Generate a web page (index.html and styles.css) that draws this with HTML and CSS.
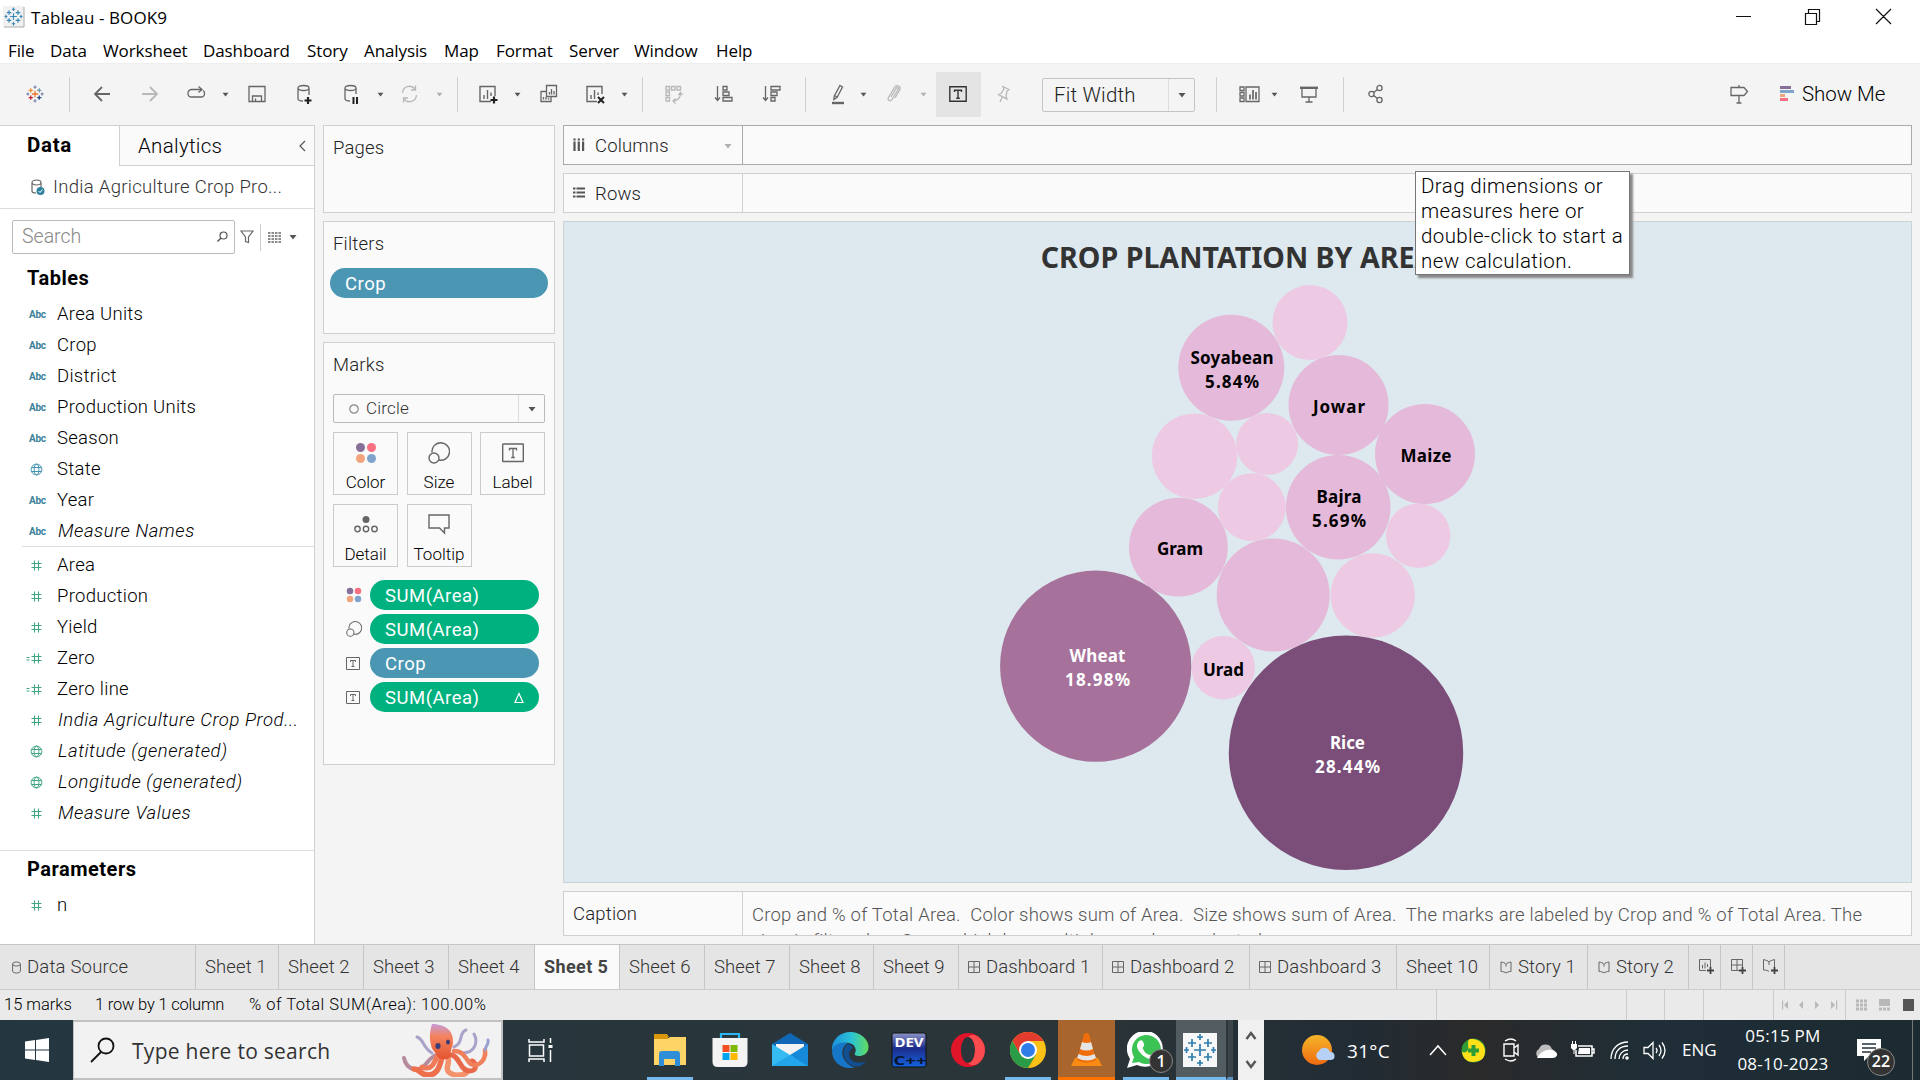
FILE: index.html
```html
<!DOCTYPE html>
<html lang="en">
<head>
<meta charset="utf-8">
<title>Tableau - BOOK9</title>
<link rel="stylesheet" href="styles.css">
</head>
<body>
<svg class="defs" width="0" height="0" aria-hidden="true">
  <defs>
    <symbol id="marks-logo" viewBox="0 0 34 34">
      <path d="M17 11v12M11 17h12M9 6v8M5 10h8M25 6v8M21 10h8M9 20v8M5 24h8M25 20v8M21 24h8M17 1v6M14 4h6M17 27v6M14 30h6M3.500 14v6M1 17h5M30.500 14v6M28 17h5"/>
    </symbol>
    <symbol id="caret" viewBox="0 0 8 6"><path d="M0.500 1h7L4 5.500z"/></symbol>
    <symbol id="globe" viewBox="0 0 13 13">
      <g fill="none" stroke="currentColor"><circle cx="6.500" cy="6.500" r="5.400"/><ellipse cx="6.500" cy="6.500" rx="2.400" ry="5.400"/><path d="M1.500 4.500h10M1.500 8.500h10"/></g>
    </symbol>
    <symbol id="hash" viewBox="0 0 13 13"><path d="M4.500 1.500v10M8.500 1.500v10M1.500 4.500h10M1.500 8.500h10" stroke="currentColor" stroke-width="1.100"/></symbol>
    <symbol id="calc-hash" viewBox="0 0 17 13"><path d="M8.500 1.500v10M12.500 1.500v10M5.500 4.500h10M5.500 8.500h10M0.500 5.500h3M0.500 8h3" stroke="currentColor" stroke-width="1.100"/></symbol>
    <symbol id="dots" viewBox="0 0 22 22"><circle cx="5.500" cy="5.500" r="4.500" fill="#866f98"/><circle cx="16.500" cy="5.500" r="4.500" fill="#fb6f82"/><circle cx="5.500" cy="16.500" r="4.500" fill="#f2a57c"/><circle cx="16.500" cy="16.500" r="4.500" fill="#80a3cb"/></symbol>
    <symbol id="size" viewBox="0 0 22 22"><path d="M4 10.500A8.800 8.800 0 1 1 10.500 18" fill="none" stroke="#666" stroke-width="1.400"/><circle cx="6" cy="16" r="5" fill="none" stroke="#666" stroke-width="1.400"/></symbol>
    <symbol id="label" viewBox="0 0 22 20"><rect x="0.700" y="1" width="20.600" height="17.500" rx="0.500" fill="none" stroke="#666" stroke-width="1.400"/><path d="M7.500 7.500V5.500h7v2M11 5.500v9M9.200 14.500h3.600" fill="none" stroke="#666" stroke-width="1.300"/></symbol>
    <symbol id="small-label" viewBox="0 0 14 13"><path d="M.5.500h13v12H.5zM4.500 5V3.500h5V5M7 3.500v6M5.500 9.500h3" fill="none" stroke="#666"/></symbol>
    <symbol id="dash" viewBox="0 0 12 12"><path d="M.5.500h11v11H.5zM6 .5v11M.5 6h11" fill="none" stroke="#666"/></symbol>
    <symbol id="book" viewBox="0 0 12 13"><path d="M6 3.500C5 1.500 3 1.500 1 1v9.500c2 0 4 .5 5 1.500 1-1 3-1.500 5-1.500V1C9 1.500 7 1.500 6 3.500zM6 3.500v2" fill="none" stroke="#666"/></symbol>
  </defs>
</svg>

<header class="titlebar">
  <svg class="app-icon" width="22" height="22" viewBox="0 0 22 22"><rect width="21" height="21" fill="#f1f1f1"/><path d="M21 1v20H1" fill="none" stroke="#aaa"/><use href="#marks-logo" x="1" y="1" width="19" height="19" stroke="#3585b5" stroke-width="2"/></svg>
  <span class="window-title">Tableau - BOOK9</span>
  <svg class="window-controls" width="160" height="20" viewBox="0 0 160 20"><path d="M0 9.500h15M69.500 6.500h11v11h-11zM72.500 6.500v-4h11v12h-3M140 2l15 15M155 2l-15 15" fill="none" stroke="#111" stroke-width="1.200"/></svg>
</header>

<nav class="menubar">
  <span>File</span><span>Data</span><span>Worksheet</span><span>Dashboard</span><span>Story</span><span>Analysis</span><span>Map</span><span>Format</span><span>Server</span><span>Window</span><span>Help</span>
</nav>

<div class="toolbar">
  <svg class="tool" viewBox="0 0 20 22"><g transform="translate(0 2) scale(.53)" stroke-width="2.400" fill="none"><path d="M17 11v12M11 17h12" stroke="#e8762c"/><path d="M9 6v8M5 10h8" stroke="#eb912b"/><path d="M25 6v8M21 10h8" stroke="#7099a6"/><path d="M9 20v8M5 24h8" stroke="#c72035"/><path d="M25 20v8M21 24h8" stroke="#1f457e"/><path d="M17 1v6M14 4h6M17 27v6M14 30h6M3.500 14v6M1 17h5M30.500 14v6M28 17h5" stroke="#7f8bb5"/></g></svg>
  <i class="sep"></i>
  <svg class="tool" viewBox="0 0 20 22"><path d="M16 11H1M8 4l-7 7 7 7" stroke-width="1.800"/></svg>
  <svg class="tool pale" viewBox="0 0 20 22"><path d="M0 11h15M8 4l7 7-7 7" stroke-width="1.800"/></svg>
  <svg class="tool" viewBox="0 0 20 22"><path d="M15 6.500H4.500a4 4 0 0 0-3.500 4c0 2 1.500 3.500 3.500 3.500h9.500c2 0 3.500-1.500 3.500-3.500 0-1.500-.7-2.600-1.500-3M11.500 3.500l3.500 3-3.500 3"/></svg>
  <svg class="caret"><use href="#caret"/></svg>
  <svg class="tool" viewBox="0 0 20 22"><path d="M1 3.500h16v15H1zM4.500 18.500v-5.500h9v5.500M7.500 18v-2.500"/></svg>
  <svg class="tool" viewBox="0 0 20 22"><path d="M1 5v10.500c0 1.500 2 2.500 5 2.500M1 5c0-1.600 2.500-2.500 5.500-2.500S12 3.400 12 5s-2.500 2.500-5.500 2.500S1 6.600 1 5zM12 5v7"/><path d="M11 14v7M7.500 17.500h7" stroke="#222" stroke-width="2.200"/></svg>
  <svg class="tool" viewBox="0 0 20 22"><path d="M1 5v10.500c0 1.500 2 2.500 5 2.500M1 5c0-1.600 2.500-2.500 5.500-2.500S12 3.400 12 5s-2.500 2.500-5.500 2.500S1 6.600 1 5zM12 5v6"/><path d="M9.500 14v7M13 14v7" stroke="#222" stroke-width="2"/></svg>
  <svg class="caret"><use href="#caret"/></svg>
  <svg class="tool pale" viewBox="0 0 20 22"><path d="M1.500 10A7 7 0 0 1 14 6M15.500 12A7 7 0 0 1 3 16M14.500 2.500V7H10M2.500 19.500V15H7"/></svg>
  <svg class="caret pale"><use href="#caret"/></svg>
  <i class="sep"></i>
  <svg class="tool" viewBox="0 0 20 22"><path d="M12 18.500H1v-15h15V13M5 16v-4M8.500 16V7M12 13V9.500" stroke-width="1.400"/><path d="M15 13.500v7M11.500 17h7" stroke="#222" stroke-width="2.200"/></svg>
  <svg class="caret"><use href="#caret"/></svg>
  <svg class="tool" viewBox="0 0 20 22"><path d="M6.500 2.500h10v11h-10zM9.500 11.500V9M11.500 11.500V6M14 11.500V8M6 8.500H1v10h10v-4.500M3.500 16.500V14M6 16.500V14M8.500 16.500V15"/></svg>
  <svg class="tool" viewBox="0 0 20 22"><path d="M11 18.500H1v-15h15V11M5 16v-4M8.500 16V7M12 12V9.500" stroke-width="1.400"/><path d="M12 14l6 6M18 14l-6 6" stroke="#222" stroke-width="2"/></svg>
  <svg class="caret"><use href="#caret"/></svg>
  <i class="sep"></i>
  <svg class="tool pale" viewBox="0 0 20 22"><path d="M1 3.500h3.500v3.500H1zM6.500 3.500H10v3.500H6.500zM12 3.500h3.500v3.500H12zM1 9h3.500v3.500H1zM1 14.500h3.500V18H1zM15.500 10c0 5-3 7.500-7 8M13.500 12l2-2.500 2 2.500M10.500 15.500L8 18l2.500 2.500"/></svg>
  <svg class="tool" viewBox="0 0 20 22"><path d="M3.500 3v14M1 14.500L3.500 17.500 6 14.500M9 3.500h4V7H9zM9 9h6v3.500H9zM9 14.500h9V18H9z"/></svg>
  <svg class="tool" viewBox="0 0 20 22"><path d="M3.500 3v14M1 14.500L3.500 17.500 6 14.500M9 3.500h9V7H9zM9 9h6v3.500H9zM9 14.500h4V18H9z"/></svg>
  <i class="sep"></i>
  <svg class="tool" viewBox="0 0 20 22"><path d="M9 2.500l2.500 1.500L6 14.500 2.800 16.500l.5-3.500zM3.500 12.500l2.500 1.500"/><path d="M1 20h12" stroke-width="2.400"/></svg>
  <svg class="caret"><use href="#caret"/></svg>
  <svg class="tool pale" viewBox="0 0 20 22"><path d="M5 14l5-8.500c1-1.600 3-.6 2 1.200L6 16.500c-1.500 2.500-5 .700-3.500-2L8.500 4.500c2.200-3.500 7-1 5 2.800L9 15"/></svg>
  <svg class="caret pale"><use href="#caret"/></svg>
  <span class="toggle"><svg width="18" height="18" viewBox="0 0 18 18"><path d="M.8 1.800h16.400v14.400H.8zM5.500 7V5.200h7V7M9 5.200v8M7.200 13.200h3.600" fill="none" stroke="#333" stroke-width="1.400"/></svg></span>
  <svg class="tool pale" viewBox="0 0 20 22"><path d="M7 3.500l6 3-2 1.500-1 5.500 1 2.500-8.500-4.500 2.500-1 3-4.500zM6.500 13.500L4 19"/></svg>
  <span class="fit"><span>Fit Width</span><svg class="caret"><use href="#caret"/></svg></span>
  <i class="sep"></i>
  <svg class="tool wide" viewBox="0 0 22 22"><path d="M1 4h4v3.500H1zM1 9.500h4V13H1zM1 15h4v3.500H1zM7 4h13v14.500H7z"/><path d="M11 16.500v-5M14 16.500V7M17 16.500V9" stroke-width="1.700"/></svg>
  <svg class="caret"><use href="#caret"/></svg>
  <svg class="tool" viewBox="0 0 20 22"><path d="M2 5v9h14V5M9 14v5M5.500 19h7"/><path d="M0 4.800h18" stroke-width="2.400"/></svg>
  <i class="sep"></i>
  <svg class="tool" viewBox="0 0 20 22"><path d="M9.500 6.500l-4 3M5.500 12.500l4 3"/><circle cx="3.500" cy="11" r="2.600"/><circle cx="11.500" cy="5" r="2.600"/><circle cx="11.500" cy="17" r="2.600"/></svg>
  <svg class="tool" viewBox="0 0 20 22"><path d="M1 4.500h13l3.500 4-3.500 4H1zM9 2v2.500M9 12.500V20M6.500 20h5"/></svg>
  <span class="show-me"><svg width="14" height="18" viewBox="0 0 14 18"><path d="M0 2.500h11" stroke="#866f98" stroke-width="3"/><path d="M0 6.500h14" stroke="#80a3cb" stroke-width="3"/><path d="M0 10.500h5" stroke="#f2a57c" stroke-width="3"/><path d="M0 14.500h8" stroke="#fb6f82" stroke-width="3"/></svg>Show Me</span>
</div>

<main class="workspace">
  <aside class="data-pane">
    <div class="pane-tabs"><b>Data</b><span class="analytics">Analytics<svg width="7" height="12" viewBox="0 0 7 12"><path d="M6 1L1 6l5 5" fill="none" stroke="#555" stroke-width="1.200"/></svg></span></div>
    <div class="source">
      <svg width="15" height="17" viewBox="0 0 15 17"><path d="M5 14c-2.500 0-4-.7-4-2V3.500M1 3.500C1 2 3 1 5.500 1S10 2 10 3.500 8 6 5.500 6 1 5 1 3.500zM10 3.500V8" fill="none" stroke="#666" stroke-width="1.200"/><circle cx="9.500" cy="12" r="4" fill="#2f7f9f"/><path d="M7.500 12l1.500 1.500 2.500-3" fill="none" stroke="#fff"/></svg>
      <span>India Agriculture Crop Pro...</span>
    </div>
    <div class="search-row">
      <div class="search"><span>Search</span><svg width="11" height="12" viewBox="0 0 11 12"><circle cx="6.500" cy="4.500" r="3.500" fill="none" stroke="#555" stroke-width="1.200"/><path d="M4 7l-3.500 3.500" stroke="#555" stroke-width="1.400"/></svg></div>
      <svg width="14" height="14" viewBox="0 0 14 14"><path d="M1 1h12L8.500 7v5.500l-3-1V7z" fill="none" stroke="#666" stroke-width="1.200"/></svg>
      <i class="bar"></i>
      <svg width="13" height="11" viewBox="0 0 13 11"><path d="M0 1h13M0 4h13M0 7h13M0 10h13" stroke="#666" stroke-width="1.300" stroke-dasharray="2.500 1"/></svg>
      <svg class="caret"><use href="#caret"/></svg>
    </div>
    <h2 class="tables-title">Tables</h2>
    <ul class="fields">
      <li><b>Abc</b>Area Units</li>
      <li><b>Abc</b>Crop</li>
      <li><b>Abc</b>District</li>
      <li><b>Abc</b>Production Units</li>
      <li><b>Abc</b>Season</li>
      <li><svg class="blue" width="13" height="13"><use href="#globe"/></svg>State</li>
      <li><b>Abc</b>Year</li>
      <li><b>Abc</b><em>Measure Names</em></li>
    </ul>
    <ul class="fields measures">
      <li><svg width="13" height="13"><use href="#hash"/></svg>Area</li>
      <li><svg width="13" height="13"><use href="#hash"/></svg>Production</li>
      <li><svg width="13" height="13"><use href="#hash"/></svg>Yield</li>
      <li><svg class="calc" width="17" height="13"><use href="#calc-hash"/></svg>Zero</li>
      <li><svg class="calc" width="17" height="13"><use href="#calc-hash"/></svg>Zero line</li>
      <li><svg width="13" height="13"><use href="#hash"/></svg><em>India Agriculture Crop Prod...</em></li>
      <li><svg width="13" height="13"><use href="#globe"/></svg><em>Latitude (generated)</em></li>
      <li><svg width="13" height="13"><use href="#globe"/></svg><em>Longitude (generated)</em></li>
      <li><svg width="13" height="13"><use href="#hash"/></svg><em>Measure Values</em></li>
    </ul>
    <div class="parameters">
      <h2>Parameters</h2>
      <ul class="fields"><li><svg width="13" height="13"><use href="#hash"/></svg>n</li></ul>
    </div>
  </aside>

  <section class="cards">
    <div class="card pages"><h3>Pages</h3></div>
    <div class="card filters"><h3>Filters</h3><div class="pill blue-pill">Crop</div></div>
    <div class="card marks">
      <h3>Marks</h3>
      <div class="mark-type"><svg width="10" height="10" viewBox="0 0 10 10"><circle cx="5" cy="5" r="4.200" fill="none" stroke="#888" stroke-width="1.200"/></svg><span>Circle</span><svg class="caret"><use href="#caret"/></svg></div>
      <div class="mark-buttons">
        <div><svg width="22" height="22"><use href="#dots"/></svg>Color</div>
        <div><svg width="22" height="22"><use href="#size"/></svg>Size</div>
        <div><svg width="22" height="22"><use href="#label"/></svg>Label</div>
        <div><svg width="24" height="22" viewBox="0 0 24 22"><circle cx="12" cy="5.500" r="3.500" fill="#666"/><g fill="none" stroke="#666" stroke-width="1.400"><circle cx="3.500" cy="15" r="2.700"/><circle cx="12" cy="15" r="2.700"/><circle cx="20.500" cy="15" r="2.700"/></g></svg>Detail</div>
        <div><svg width="22" height="22" viewBox="0 0 22 22"><path d="M1 1h20v13h-4.500v5l-5-5H1z" fill="none" stroke="#666" stroke-width="1.400"/></svg>Tooltip</div>
      </div>
      <div class="encodings">
        <svg width="16" height="16"><use href="#dots"/></svg><div class="pill green-pill">SUM(Area)</div>
        <svg width="16" height="16"><use href="#size"/></svg><div class="pill green-pill">SUM(Area)</div>
        <svg width="14" height="13"><use href="#small-label"/></svg><div class="pill blue-pill">Crop</div>
        <svg width="14" height="13"><use href="#small-label"/></svg><div class="pill green-pill">SUM(Area)<svg width="10" height="12" viewBox="0 0 10 12"><path d="M5 1.500l4 9H1z" fill="none" stroke="#fff" stroke-width="1.200"/></svg></div>
      </div>
    </div>
  </section>

  <section class="sheet">
    <div class="shelf active"><div class="shelf-name"><svg width="12" height="14" viewBox="0 0 12 14"><path d="M1.500 3.500V13M5.800 3.500V13M10.100 3.500V13M1.500.5v2M5.800.5v2M10.100.5v2" stroke="#555" stroke-width="2.200"/></svg>Columns<svg class="caret pale"><use href="#caret"/></svg></div>
      <div class="drop-hint">Drag dimensions or<br>measures here or<br>double-click to start a<br>new calculation.</div>
    </div>
    <div class="shelf"><div class="shelf-name"><svg width="12" height="14" viewBox="0 0 12 14"><path d="M3.500 2.500H12M3.500 6.500H12M3.500 10.500H12M0 2.500h2.500M0 6.500h2.500M0 10.500h2.500" stroke="#555" stroke-width="1.800"/></svg>Rows</div></div>
    <div class="viz">
      <h1>CROP PLANTATION BY AREA</h1>
      <svg class="bubbles" viewBox="564 282 1346 600" width="1346" height="600">
        <g fill="#edc9e4">
          <circle cx="1310" cy="322.600" r="37.500"/><circle cx="1194.600" cy="456.200" r="42.800"/><circle cx="1267.100" cy="444" r="31"/><circle cx="1251.800" cy="507.200" r="34"/><circle cx="1418.200" cy="535.700" r="32.200"/><circle cx="1372.700" cy="595.400" r="42.200"/><circle cx="1223.200" cy="667.800" r="31.700"/>
        </g>
        <g fill="#e5b9d9">
          <circle cx="1231.300" cy="367.700" r="53"/><circle cx="1338.500" cy="405" r="50"/><circle cx="1425" cy="454" r="50"/><circle cx="1338.200" cy="507.200" r="52.300"/><circle cx="1178.400" cy="547.200" r="49.400"/><circle cx="1273.200" cy="595" r="56.500"/>
        </g>
        <circle cx="1095.700" cy="666.200" r="95.600" fill="#a6719b"/>
        <circle cx="1346" cy="752.800" r="117.200" fill="#7b4d79"/>
        <g class="mark-label">
          <text x="1232" y="364" textLength="83">Soyabean</text><text x="1232" y="388" textLength="54">5.84%</text>
          <text x="1339" y="413" textLength="52">Jowar</text>
          <text x="1426" y="462" textLength="51">Maize</text>
          <text x="1339" y="503" textLength="45">Bajra</text><text x="1339" y="527" textLength="54">5.69%</text>
          <text x="1180" y="555" textLength="46">Gram</text>
          <text x="1223.500" y="676" textLength="41">Urad</text>
          <g fill="#fff"><text x="1097.500" y="662" textLength="56">Wheat</text><text x="1097.500" y="686" textLength="65">18.98%</text>
          <text x="1347.500" y="749" textLength="35">Rice</text><text x="1347.500" y="773" textLength="65">28.44%</text></g>
        </g>
      </svg>
    </div>
    <div class="caption"><div>Caption</div><p>Crop and % of Total Area.&nbsp; Color shows sum of Area.&nbsp; Size shows sum of Area.&nbsp; The marks are labeled by Crop and % of Total Area. The<br>view is filtered on Crop, which has multiple members selected.</p></div>
  </section>
</main>

<nav class="sheet-tabs">
  <span class="data-source"><svg width="9" height="13" viewBox="0 0 9 13"><path d="M.6 3v7c0 1.200 1.700 2 3.900 2s3.900-.8 3.900-2V3M.6 3c0-1.200 1.700-2 3.900-2s3.900.8 3.900 2-1.700 2-3.900 2S.6 4.200.6 3z" fill="none" stroke="#666"/></svg>Data Source</span>
  <span>Sheet 1</span><span>Sheet 2</span><span>Sheet 3</span><span>Sheet 4</span><span class="current">Sheet 5</span><span>Sheet 6</span><span>Sheet 7</span><span>Sheet 8</span><span>Sheet 9</span>
  <span><svg width="12" height="12"><use href="#dash"/></svg>Dashboard 1</span><span><svg width="12" height="12"><use href="#dash"/></svg>Dashboard 2</span><span><svg width="12" height="12"><use href="#dash"/></svg>Dashboard 3</span>
  <span>Sheet 10</span>
  <span class="story"><svg width="12" height="13"><use href="#book"/></svg>Story 1</span><span class="story"><svg width="12" height="13"><use href="#book"/></svg>Story 2</span>
  <span class="new"><svg width="16" height="16" viewBox="0 0 16 16"><path d="M7 11.500H.5V.5h11V8M3.500 9.500V6M6 9.500V3.500M8.500 8V5" fill="none" stroke="#666"/><path d="M11.500 8v7M8 11.500h7" stroke="#444" stroke-width="1.800"/></svg></span>
  <span class="new"><svg width="16" height="16" viewBox="0 0 16 16"><path d="M8 11.500H.5V.5h11V8M6 .5v11M.5 6h11" fill="none" stroke="#666"/><path d="M11.500 8v7M8 11.500h7" stroke="#444" stroke-width="1.800"/></svg></span>
  <span class="new"><svg width="16" height="16" viewBox="0 0 16 16"><path d="M6 3C5 1.500 3 1.500.5.500V11c2.500 0 4.500.5 5.500 1.500M6 3c1-1.500 3-1.500 5.500-2.500V8M6 3v3" fill="none" stroke="#666"/><path d="M11.500 8v7M8 11.500h7" stroke="#444" stroke-width="1.800"/></svg></span>
  <span></span>
</nav>

<footer class="status">
  <span>15 marks</span><span class="rows">1 row by 1 column</span><span class="total">% of Total SUM(Area): 100.00%</span>
  <i></i><i></i><i></i><i></i>
  <span class="pager"><svg width="56" height="10" viewBox="0 0 56 10"><path d="M0 .5h1.200v9H0zM6 1v8L2 5zM21 1v8l-4-4zM33 1v8l4-4zM49 1v8l4-4zM54 .5h1.200v9H54z" fill="#b8b8b8"/></svg></span>
  <span class="views"><svg width="58" height="12" viewBox="0 0 58 12"><path d="M0 2h11M0 6h11M0 10h11" stroke="#b8b8b8" stroke-width="3" stroke-dasharray="3 1"/><path d="M23 0h11v7H23z" fill="#b8b8b8"/><path d="M23 10h11" stroke="#b8b8b8" stroke-width="3" stroke-dasharray="3 1"/><path d="M47 0h11v12H47z" fill="#555"/></svg></span>
</footer>

<footer class="taskbar">
  <span class="cell"><svg width="24" height="24" viewBox="0 0 24 24"><path d="M0 3.500L10 2v9.500H0zM11 1.900L24 0v11.500H11zM0 12.500h10V22L0 20.500zM11 12.500h13V24l-13-1.900z" fill="#fff"/></svg></span>
  <div class="win-search">
    <svg width="26" height="26" viewBox="0 0 26 26"><circle cx="16" cy="9" r="7.500" fill="none" stroke="#111" stroke-width="1.800"/><path d="M11 15L1 25" stroke="#111" stroke-width="1.800"/></svg>
    <span>Type here to search</span>
    <svg class="octopus" width="88" height="54" viewBox="0 0 88 54"><defs><linearGradient id="oct" x1="0" y1="0" x2="0" y2="1"><stop offset="0" stop-color="#c79bd8"/><stop offset=".35" stop-color="#f4835e"/><stop offset="1" stop-color="#e4532f"/></linearGradient></defs>
      <g fill="none" stroke-linecap="round"><path d="M30 30C20 24 22 16 15 14M52 24c10-4 4-14 12-17M60 30c14 0 16-12 12-19" stroke="#a9a3c9" stroke-width="3"/><path d="M34 32C24 36 24 48 12 46 6 45 3 40 2 35" stroke="#b58b9d" stroke-width="4"/><path d="M36 32c-4 8-6 16-16 12" stroke="#ef7a55" stroke-width="5"/><path d="M40 34c-2 8-4 18-14 18-8 0-8-6-14-6" stroke="#ee6f4b" stroke-width="5.500"/><path d="M46 34c2 8-4 12 2 16 5 3 12 3 16 0" stroke="#f4926b" stroke-width="5.500"/><path d="M50 32c8 2 8 16 18 16 8 0 6-9 2-10" stroke="#e8694a" stroke-width="5"/><path d="M52 28c14 0 12 16 22 14 8-2 10-10 9-15" stroke="#f0805b" stroke-width="4.500"/><path d="M83 27c1-5 4-6 3-10" stroke="#9aa0d0" stroke-width="3"/></g>
      <path d="M30 1c12 0 22 6 21 18 0 5-3 7-2 13 0 5-11 6-14 1-1-4-5-5-6-11C27 14 28 8 30 1z" fill="url(#oct)"/><ellipse cx="36" cy="23" rx="2.600" ry="3" fill="#3c3c78"/><ellipse cx="46" cy="19" rx="2" ry="2.500" fill="#3c3c78"/></svg>
  </div>
  <span class="cell"><svg width="25" height="25" viewBox="0 0 25 25"><path d="M1 1v3h15V1M1.500 7h14v11h-14zM1 24v-3h15v3M22.500 0v5M22.500 12v12" fill="none" stroke="#fff" stroke-width="1.500"/><path d="M20.500 7h4v3h-4z" fill="#fff"/></svg></span>
  <span></span>
  <span class="cell run"><svg width="32" height="32" viewBox="0 0 32 32"><path d="M0 0h13l2 3h-1v7H0z" fill="#d9980c"/><path d="M0 5h13l3-2h16v28H0z" fill="#ffd466"/><path d="M5 32V20q0-3 3-3h15q3 0 3 3v12h-5v-7H10v7z" fill="#2e8fd8"/></svg></span>
  <span class="cell"><svg width="36" height="36" viewBox="0 0 36 36"><path d="M9 8V2h18v6" fill="none" stroke="#29b6f6" stroke-width="2.200"/><path d="M.5 6h35v24q0 5-5 5H6q-5.500 0-5.500-5z" fill="#f4f4f4"/><path d="M10.500 13h7v7h-7z" fill="#f25022"/><path d="M18.500 13h7v7h-7z" fill="#7fba00"/><path d="M10.500 21h7v7h-7z" fill="#00a4ef"/><path d="M18.500 21h7v7h-7z" fill="#ffb900"/></svg></span>
  <span class="cell"><svg width="36" height="34" viewBox="0 0 36 34"><path d="M0 11L18 0l18 11v22H0z" fill="#0f67b5"/><path d="M4 11h28v6L18 26 4 17z" fill="#f3f3f3"/><path d="M0 11l36 22H0z" fill="#35baf2"/><path d="M36 11v22L18 22z" fill="#1689d8"/><path d="M0 33l18-11 18 11z" fill="#22a5ea"/></svg></span>
  <span class="cell"><svg width="37" height="36" viewBox="0 0 37 36"><defs><linearGradient id="edge" x1="0" x2="1"><stop offset="0" stop-color="#1a8fdc"/><stop offset=".55" stop-color="#2cc4d4"/><stop offset="1" stop-color="#62db5b"/></linearGradient></defs><path d="M0 19C-1 8 8 0 18 0c11 0 19 8 18.500 15.500C36 22 31 24 27 24c-4 0-5-1.500-4-3 2-3 0-9-6-10C9 10 2 13 0 19z" fill="url(#edge)"/><path d="M0 19c2-7 10-10 16-8-5 3-7 8-5 14 2 5 6 9 12 10.500C11 38 0 31 0 19z" fill="#1676c8"/><path d="M16 12c-6 4-6 13 0 19 6 5 13 5 18-2-8 4-17 1-17-7 0-4 4-6 4-6s-1-3-5-4z" fill="#124f93"/></svg></span>
  <span class="cell"><svg width="36" height="36" viewBox="0 0 36 36"><defs><linearGradient id="dev" x1="0" y1="0" x2="0" y2="1"><stop offset="0" stop-color="#8c94c8"/><stop offset=".45" stop-color="#1c2c8c"/><stop offset="1" stop-color="#1464e0"/></linearGradient></defs><rect x="1" y="1" width="34" height="34" rx="2" fill="url(#dev)" stroke="#111"/><text x="18" y="15" class="dev-top" textLength="29" lengthAdjust="spacingAndGlyphs">DEV</text><text x="19" y="32.500" class="dev-bottom" textLength="33" lengthAdjust="spacingAndGlyphs">C++</text></svg></span>
  <span class="cell"><svg width="34" height="34" viewBox="0 0 34 34"><path d="M17 0a17 17 0 1 0 0 34 17 17 0 0 0 0-34zm0 4c4 0 7 6 7 13s-3 13-7 13-7-6-7-13 3-13 7-13z" fill="#e0152a" fill-rule="evenodd"/><path d="M17 30c4 0 7-6 7-13S21 4 17 4c3-3 7-2 10-.5A17 17 0 0 1 28 30c-4 3-8 3-11 0z" fill="#fa4b4e"/></svg></span>
  <span class="cell run"><svg width="36" height="36" viewBox="0 0 36 36"><circle cx="18" cy="18" r="18" fill="#fbc116"/><path d="M2.400 9A18 18 0 0 1 33.600 9H18L10 22z" fill="#e33b2e"/><path d="M2.400 9A18 18 0 0 0 18 36l8-13.500-16-.5z" fill="#2a9c48"/><circle cx="18" cy="18" r="9" fill="#fff"/><circle cx="18" cy="18" r="7" fill="#2f7de8"/></svg></span>
  <span class="cell vlc"><svg width="31" height="34" viewBox="0 0 31 34"><path d="M4 25h23l4 8H0z" fill="#f78b13"/><path d="M13 1q2.500-2 5 0l7 26q-9.500 5-19 0z" fill="#ee6d0c"/><path d="M11 9q4.500 2 9 0l2 7q-6.500 3-13 0zM7.500 21q8 4 16 0l1.500 4q-9 5-19 0z" fill="#e5e5e5"/></svg></span>
  <span class="cell run"><svg width="38" height="36" viewBox="0 0 38 36"><path d="M0 36l3-9A18 18 0 1 1 10 33z" fill="#fff"/><path d="M5 31l2-6A14.500 14.500 0 1 1 12 30z" fill="#3bc353"/><path d="M12 9c3-2 4 0 5 3 1 2-2 3-1 5 2 4 4 5 7 6 2 0 2-3 5-2 3 2 4 3 2 5-6 6-20-5-20-12 0-2 1-4 2-5z" fill="#fff"/></svg><b class="badge one">1</b></span>
  <span class="cell tableau"><svg width="34" height="34" viewBox="0 0 34 34"><rect width="34" height="34" fill="#f7f7f7"/><use href="#marks-logo" width="34" height="34" stroke="#2f7fb0" stroke-width="1.700"/></svg></span>
  <span class="stack"></span>
  <span class="scroller"><svg width="12" height="38" viewBox="0 0 12 38"><path d="M1.500 8L6 2l4.500 6M1.500 30L6 36l4.500-6" fill="none" stroke="#555" stroke-width="2.400"/></svg></span>
  <svg class="weather" width="34" height="32" viewBox="0 0 34 32"><defs><linearGradient id="sun" x1="0" y1="0" x2="0" y2="1"><stop offset="0" stop-color="#f5b52a"/><stop offset="1" stop-color="#ee6a10"/></linearGradient></defs><circle cx="15" cy="16" r="15" fill="url(#sun)"/><path d="M17 26a5 5 0 0 1 0-9 6 6 0 0 1 11 1 4 4 0 0 1 1 8z" fill="#b7d0f6"/></svg>
  <span class="temp">31°C</span>
  <svg width="18" height="12" viewBox="0 0 18 12"><path d="M1 11l8-9 8 9" fill="none" stroke="#fff" stroke-width="1.500"/></svg>
  <svg width="25" height="25" viewBox="0 0 25 25"><circle cx="12.500" cy="12.500" r="12" fill="#2f9c35"/><path d="M8 1.500c8-2 16 4 16 11s-3 9-5 10c-7 3-17 2-18-9 2 2 5 1 6-2s-1-7 1-10z" fill="#ffe11a"/><path d="M12.500 7v11M7 12.500h11" stroke="#2f9c35" stroke-width="4"/></svg>
  <svg width="18" height="24" viewBox="0 0 18 24"><path d="M2 6h10v12H2zM12 10l4-3v10l-4-3M3 3q6-4 11 0M3 21q6 4 11 0" fill="none" stroke="#fff" stroke-width="1.400"/></svg>
  <svg width="24" height="17" viewBox="0 0 24 17"><path d="M5 16a5 5 0 0 1 0-9 7 7 0 0 1 13 0 5 5 0 0 1 1 9z" fill="#bdbdbd"/><path d="M3 16c3-5 8-9 14-8 8 1 8 8 1 8z" fill="#fff"/></svg>
  <svg width="25" height="18" viewBox="0 0 25 18"><path d="M8 5h14v10H6V9M22 8h2v4h-2" fill="none" stroke="#fff" stroke-width="1.500"/><path d="M9 7h11v6H8zM1 3h6v4L5 9H3L1 7z" fill="#fff"/><path d="M2.500 0v3M5.500 0v3M4 9v4" stroke="#fff"/></svg>
  <svg width="19" height="19" viewBox="0 0 19 19"><g fill="none" stroke="#fff" stroke-width="1.300"><path d="M1 18C1 8 8 1 18 1M5 18C5 10 10 5 18 5M9 18c0-5 4-9 9-9M13 18c0-3 2-5 5-5"/></g><circle cx="17" cy="17" r="1.800" fill="#fff"/></svg>
  <svg width="23" height="19" viewBox="0 0 23 19"><path d="M1 6.500h4l5-5v16l-5-5H1zM13 7q2 2.500 0 5M16 4q4 5.500 0 11M19 1.500q6 8 0 16" fill="none" stroke="#fff" stroke-width="1.300"/></svg>
  <span class="lang">ENG</span>
  <span class="clock"><span>05:15 PM</span><span>08-10-2023</span></span>
  <span class="notices"><svg width="24" height="24" viewBox="0 0 24 24"><path d="M0 1h24v17H12l-5 5v-5H0z" fill="#fff"/><path d="M5 6h14M5 10h14M5 14h9" stroke="#26323a" stroke-width="1.300"/></svg><b class="badge">22</b></span>
  <i class="desktop-edge"></i>
</footer>
</body>
</html>
```

FILE: styles.css
```css
* { box-sizing: border-box; }
body { margin: 0; width: 1920px; height: 1080px; overflow: hidden; display: flex; flex-direction: column; background: #f4f4f4; color: #000; font: 300 18.500px/1.2 "Roboto", "Liberation Sans", sans-serif; }
svg { display: block; flex: none; }
.defs { position: absolute; }
h1, h2, h3, p, ul { margin: 0; padding: 0; }
ul { list-style: none; }

/* window chrome */
.titlebar { height: 34px; flex: none; display: flex; align-items: center; background: #fff; padding-left: 3px; font-family: "Open Sans", sans-serif; font-size: 17px; font-weight: 400; }
.window-title { margin-left: 6px; letter-spacing: 0.08px; padding-top: 2px; }
.window-controls { margin-left: auto; margin-right: 24px; }
.menubar { height: 30px; flex: none; display: grid; align-items: center; background: #fff; border-bottom: 1px solid #eee; padding: 5px 0 0 8px; grid-template-columns: 42px 53px 100px 104px 57px 80px 52px 73px 65px 82px 60px; font-family: "Open Sans", sans-serif; font-size: 17px; font-weight: 400; letter-spacing: -0.1px; white-space: nowrap; }

.toolbar { height: 61px; flex: none; display: grid; align-items: center; padding-left: 26px; padding-bottom: 1px; grid-template-columns: 43px 25px 48px 45px 35px 26px 49px 47px 33px 24px 35px 21px 22px 35px 26px 46px 35px 21px 23px 49px 48px 43px 26px 29px 26px 34px 16px 60px 46px 174px 23px 32px 29px 43px 25px 362px 50px 140px; }
.tool { width: 20px; height: 22px; fill: none; stroke: #666; stroke-width: 1.3; }
.tool.wide { width: 22px; }
.tool.pale { stroke: #b8b8b8; }
.caret { width: 8px; height: 6px; fill: #555; }
.caret.pale { fill: #b0b0b0; }
.toolbar > .caret { width: 7px; height: 5px; }
.sep { width: 1px; height: 35px; background: #d0d0d0; }
.toggle { width: 45px; height: 45px; background: #e4e4e4; display: flex; align-items: center; justify-content: center; }
.toggle svg { margin-right: 2px; }
.fit { width: 153px; height: 34px; margin-top: 1px; border: 1px solid #c4c4c4; border-radius: 2px; display: flex; align-items: center; font-size: 20.500px; color: #222; letter-spacing: 0.2px; }
.fit span { width: 126px; padding-left: 11px; height: 100%; line-height: 32px; border-right: 1px solid #ddd; }
.fit .caret { margin-left: 9px; }
.show-me { display: flex; align-items: center; gap: 8px; font-size: 20.500px; white-space: nowrap; letter-spacing: -0.05px; }

/* three-column workspace */
.workspace { height: 819px; flex: none; display: grid; grid-template-columns: 315px 232px 1349px; column-gap: 8px; }
.data-pane { background: #fff; border: 1px solid #d0d0d0; border-width: 1px 1px 0 0; display: flex; flex-direction: column; }
.pane-tabs { height: 40px; display: grid; grid-template-columns: 119px 1fr; font-size: 20.500px; line-height: 38px; flex: none; }
.pane-tabs b { padding-left: 27px; letter-spacing: 0.7px; font-weight: 700; }
.analytics { border: 1px solid #d0d0d0; border-width: 0 0 1px 1px; background: #fafafa; padding: 0 8px 0 18px; display: flex; align-items: center; justify-content: space-between; letter-spacing: 0.3px; }
.source { height: 43px; flex: none; border-bottom: 1px solid #ddd; display: flex; align-items: center; gap: 7px; padding-left: 31px; color: #333; letter-spacing: 0.3px; }
.search-row { display: flex; align-items: center; margin: 11px 0 0 12px; height: 34px; flex: none; }
.search { width: 223px; height: 34px; border: 1px solid #bbb; border-radius: 2px; display: flex; align-items: center; justify-content: space-between; padding: 0 6px 0 9px; margin-right: 5px; color: #888; font-size: 19.500px; }
.bar { width: 1px; height: 27px; background: #ccc; margin: 0 7px 0 6px; }
.search-row .caret { margin-left: 8px; }
.tables-title, .parameters h2 { font-size: 20px; font-weight: 700; padding-left: 27px; letter-spacing: 0.5px; }
.tables-title { margin-top: 12px; height: 33px; line-height: 24px; flex: none; }
.fields li { height: 31px; display: flex; align-items: center; padding-left: 57px; letter-spacing: 0.28px; white-space: nowrap; }
.fields em { letter-spacing: 0.55px; margin-left: 1px; }
.fields b { width: 28px; margin-left: -28px; font-size: 10px; font-weight: 700; color: #3b8199; letter-spacing: -0.3px; }
.fields svg { margin: 0 14px 0 -27px; color: #3fa583; fill: none; }
.fields svg.blue { color: #4293b2; }
.fields svg.calc { margin-left: -31px; }
.measures { margin-left: 22px; border-top: 1px solid #ddd; padding-top: 3px; margin-top: -1px; }
.measures li { padding-left: 35px; }
.parameters { margin-top: 21px; border-top: 1px solid #ddd; padding-top: 6px; }
.parameters .fields { margin-top: 9px; }

.cards { display: flex; flex-direction: column; gap: 8px; }
.card { background: #fafafa; border: 1px solid #d0d0d0; flex: none; }
.card h3 { font-size: 18.500px; font-weight: 300; color: #222; line-height: 22px; padding: 11px 9px 0; letter-spacing: 0.2px; }
.pages { height: 88px; }
.filters { height: 113px; }
.marks { height: 423px; }
.pill { height: 30px; border-radius: 15px; color: #fff; font-size: 18.500px; font-weight: 400; display: flex; align-items: center; justify-content: space-between; padding: 2px 15px 0 15px; letter-spacing: 0.5px; }
.blue-pill { background: #4a96b3; }
.green-pill { background: #00b180; }
.filters .pill { margin: 13px 6px 0; }
.mark-type { margin: 18px 9px 0; height: 29px; border: 1px solid #bbb; border-radius: 2px; display: flex; align-items: center; color: #333; font-size: 17px; letter-spacing: 0.2px; }
.mark-type svg:first-child { margin: 0 7px 0 15px; }
.mark-type span { width: 153px; height: 100%; line-height: 27px; border-right: 1px solid #ddd; }
.mark-type .caret { margin-left: 9px; }
.mark-buttons { margin: 9px 9px 0; display: grid; grid-template-columns: repeat(3, 65px); column-gap: 8.500px; row-gap: 9px; }
.mark-buttons div { height: 63px; border: 1px solid #ccc; display: flex; flex-direction: column; align-items: center; font-size: 17px; line-height: 20px; padding-top: 9px; gap: 8px; }
.encodings { margin: 13px 15px 0 22px; display: grid; grid-template-columns: 24px 169px; row-gap: 4px; align-items: center; }
.encodings > svg { justify-self: start; }

.sheet { display: flex; flex-direction: column; gap: 8px; }
.shelf { height: 40px; background: #fafafa; border: 1px solid #d0d0d0; position: relative; flex: none; }
.shelf.active, .shelf.active .shelf-name { border-color: #aaa; }
.shelf-name { width: 179px; height: 100%; border-right: 1px solid #d0d0d0; display: flex; align-items: center; gap: 10px; padding: 2px 10px 0 9px; color: #222; letter-spacing: 0.15px; }
.shelf-name svg { margin-bottom: 2px; }
.shelf-name .caret { margin-left: auto; margin-bottom: 0; }
.drop-hint { position: absolute; z-index: 2; left: 851px; top: 45px; width: 215px; height: 104px; background: #fff; border: 1px solid #777; box-shadow: 3px 3px 2px #888; padding: 2px 5px 0; font-size: 20.500px; letter-spacing: 0.4px; line-height: 25px; color: #000; white-space: nowrap; }
.viz { height: 662px; background: #dde9ee; border: 1px solid #ccd3d6; flex: none; }
.viz h1 { height: 60px; padding-top: 13px; text-align: center; color: #333; font: 700 28.600px/44px "Noto Sans", sans-serif; }
.bubbles { display: block; }
.mark-label { font: 700 17px "Noto Sans", sans-serif; text-anchor: middle; fill: #000; }
.caption { height: 45px; background: #fafafa; border: 1px solid #d0d0d0; display: grid; grid-template-columns: 179px 1fr; overflow: hidden; flex: none; }
.caption div { border-right: 1px solid #d0d0d0; padding-left: 9px; padding-top: 1px; line-height: 43px; color: #222; letter-spacing: 0.2px; }
.caption p { padding-left: 9px; padding-top: 10px; line-height: 26px; color: #555; height: 43px; overflow: hidden; white-space: nowrap; letter-spacing: 0.21px; }

.sheet-tabs { height: 46px; flex: none; display: grid; grid-template-columns: 196px 83px 85px 85px 86px 85px 85px 85px 84px 85px 144px 147px 147px 93px 98px 101px 32px 32px 32px 135px; border-top: 1px solid #c6c6c6; border-bottom: 1px solid #ccc; background: #e5e5e5; color: #333; letter-spacing: 0.1px; }
.sheet-tabs span { border-right: 1px solid #c6c6c6; padding-left: 9px; display: flex; align-items: center; gap: 6px; white-space: nowrap; }
.sheet-tabs .data-source { padding-left: 12px; letter-spacing: 0.2px; }
.sheet-tabs .story { padding-left: 10px; }
.sheet-tabs .new { padding-left: 10px; }
.sheet-tabs span:last-child { border: 0; }
.sheet-tabs .current { background: #fafafa; font-weight: 700; font-size: 18px; letter-spacing: 0.4px; color: #444; }
.status { height: 30px; flex: none; background: #eaeaea; display: grid; grid-template-columns: 91px 154px 1187px 190px 38px 39px 70px 72px 75px; align-items: center; padding-left: 4px; font-size: 16.500px; white-space: nowrap; }
.status .rows { letter-spacing: -0.2px; }
.status .total { letter-spacing: 0.5px; }
.status i, .status .pager { height: 30px; border-left: 1px solid #ccc; }
.status .pager { padding-left: 8px; display: flex; align-items: center; }
.status .views { height: 30px; border-left: 1px solid #ccc; padding-left: 10px; display: flex; align-items: center; }

/* desktop taskbar */
.taskbar { height: 60px; flex: none; display: grid; align-items: center; background: linear-gradient(90deg, #243741 0, #2b3538 57%, #212c35 70%, #2a2a2a 77%, #1f2e37 86%, #1c2a31 100%); color: #fff; font-family: "Open Sans", sans-serif; font-weight: 400; grid-template-columns: 73px 430px 74px 63px 60px 59px 61px 60px 58px 60px 60px 57px 61px 50px 12px 64px 45px 82px 32px 41px 32px 36px 40px 33px 39px 48px 106px 21px 55px 8px; }
.taskbar > * { grid-row: 1; }
.cell { height: 60px; display: flex; align-items: center; justify-content: center; position: relative; }
.run { background: linear-gradient(#76b9ed, #76b9ed) center bottom / 46px 3px no-repeat; }
.vlc { background: #a8652d; border-bottom: 3px solid #ff7200; padding-top: 3px; }
.tableau { background: #535c61; border-bottom: 3px solid #76b9ed; padding-top: 3px; }
.tableau svg { margin-right: 2px; }
.stack { height: 60px; width: 7px; background: #3a4449; border-bottom: 3px solid #5c93be; border-left: 2px solid #2d363a; }
.win-search { height: 60px; background: #f2f2f2; border: 3px solid #c1c1c1; border-width: 2px 2px 2px 1px; display: flex; align-items: center; padding-left: 16px; color: #333; font-size: 21px; }
.win-search span { margin-left: 16px; letter-spacing: 0.27px; padding-top: 4px; }
.octopus { margin-left: auto; margin-right: 11px; }
.scroller { width: 26px; height: 60px; background: #f0f0f0; display: flex; align-items: center; justify-content: center; }
.temp { font-size: 19px; letter-spacing: 0.3px; padding-top: 2px; }
.lang { font-size: 17px; padding-top: 1px; }
.clock { grid-column: span 2; width: 106px; display: flex; flex-direction: column; font-size: 17px; line-height: 28px; text-align: center; letter-spacing: 0.25px; }
.notices { position: relative; }
.badge { position: absolute; left: 10px; top: 10px; width: 28px; height: 28px; border: 1px solid #888; border-radius: 50%; background: #333; font: 600 16px/25px "Open Sans", sans-serif; text-align: center; color: #fff; }
.badge.one { left: 34px; top: 29px; width: 24px; height: 24px; line-height: 22px; }
.desktop-edge { width: 1px; height: 60px; background: #777; }
.dev-top, .dev-bottom { font: 700 12.500px "Open Sans", sans-serif; text-anchor: middle; fill: #fff; }
.dev-bottom { fill: #08162f; }
```
